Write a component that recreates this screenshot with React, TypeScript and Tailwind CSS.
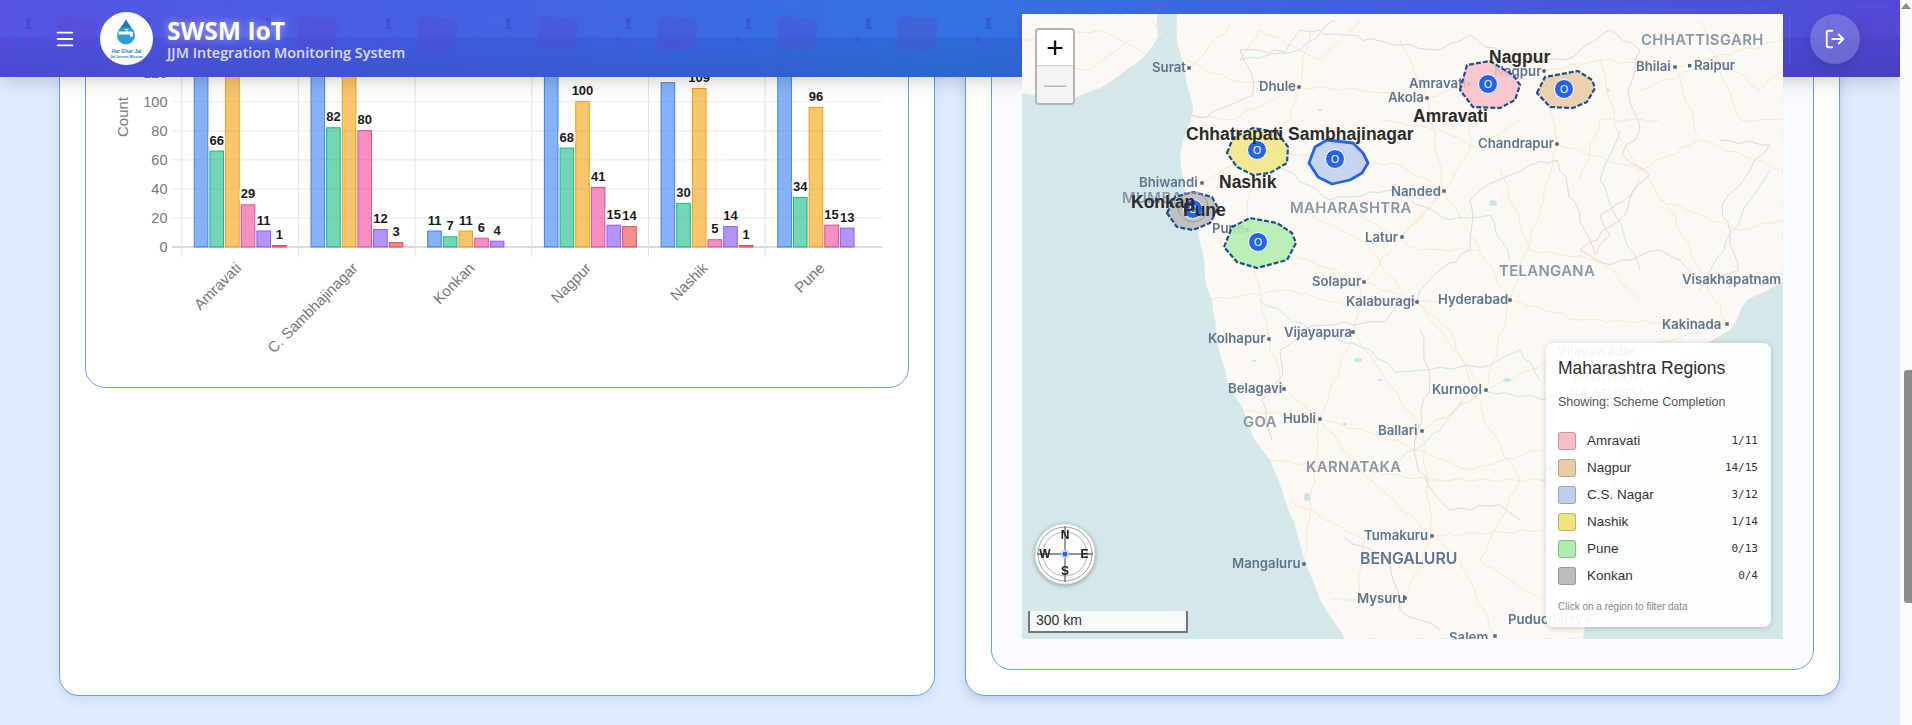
import React from 'react';
import { LogOut, Menu } from 'lucide-react';

const SANS = "font-['Liberation_Sans',Arial,sans-serif]";

const series = [
  { fill: 'rgba(59,130,246,0.62)', stroke: '#3b82f6' },
  { fill: 'rgba(16,185,129,0.58)', stroke: '#10b981' },
  { fill: 'rgba(245,158,11,0.6)', stroke: '#f59e0b' },
  { fill: 'rgba(236,72,153,0.6)', stroke: '#ec4899' },
  { fill: 'rgba(139,92,246,0.65)', stroke: '#8b5cf6' },
  { fill: 'rgba(239,68,68,0.6)', stroke: '#ef4444' },
];

const chartData = [
  { name: 'Amravati', values: [210, 66, 160, 29, 11, 1] },
  { name: 'C. Sambhajinagar', values: [220, 82, 170, 80, 12, 3] },
  { name: 'Konkan', values: [11, 7, 11, 6, 4, 0] },
  { name: 'Nagpur', values: [190, 68, 100, 41, 15, 14] },
  { name: 'Nashik', values: [113, 30, 109, 5, 14, 1] },
  { name: 'Pune', values: [180, 34, 96, 15, 13, 0] },
];

const Y_ZERO = 247;
const Y_UNIT = 1.454;
const CAT_START = 181.7;
const CAT_WIDTH = 116.7;

const BarChart = () => (
  <svg viewBox="86 -73 822 460" className={`h-[460px] w-[822px] ${SANS}`}>
    {[0, 20, 40, 60, 80, 100, 120].map((t) => {
      const y = Y_ZERO - t * Y_UNIT;
      return (
        <g key={t}>
          <line x1={172} x2={882} y1={y} y2={y} stroke={t === 0 ? '#cfcfcf' : '#eeeeee'} strokeWidth={1.4} />
          <text x={167.5} y={y + 5} textAnchor="end" className="fill-[#777777] text-[14.5px]">
            {t}
          </text>
        </g>
      );
    })}
    {[0, 1, 2, 3, 4, 5].map((i) => (
      <line
        key={i}
        x1={CAT_START + i * CAT_WIDTH}
        x2={CAT_START + i * CAT_WIDTH}
        y1={-60}
        y2={256.5}
        stroke="#e2e2e2"
        strokeWidth={1}
      />
    ))}
    <text transform="translate(128 117) rotate(-90)" textAnchor="middle" className="fill-[#777777] text-[15px]">
      Count
    </text>
    {chartData.map((cat, c) => {
      const left = CAT_START + c * CAT_WIDTH + 12.6;
      return (
        <g key={cat.name}>
          {cat.values.map((v, s) => {
            if (v === 0) return null;
            const x = left + s * 15.65;
            const top = Y_ZERO - v * Y_UNIT;
            return (
              <rect
                key={s}
                x={x}
                y={top}
                width={13.6}
                height={Y_ZERO - top}
                fill={series[s].fill}
                stroke={series[s].stroke}
                strokeWidth={1}
              />
            );
          })}
          {cat.values.map((v, s) => {
            if (v === 0) return null;
            const cx = left + s * 15.65 + 6.8;
            const top = Y_ZERO - v * Y_UNIT;
            const w = String(v).length * 7 + 3;
            return (
              <g key={s}>
                <rect x={cx - w / 2} y={top - 18} width={w} height={15} rx={3} fill="rgba(255,255,255,0.9)" />
                <text x={cx} y={top - 6.5} textAnchor="middle" className="fill-[#1a1a1a] text-[13px] font-bold">
                  {v}
                </text>
              </g>
            );
          })}
          <text
            transform={`translate(${CAT_START + c * CAT_WIDTH + CAT_WIDTH / 2 + 2} 269) rotate(-45)`}
            textAnchor="end"
            className="fill-[#777777] text-[15px]"
          >
            {cat.name}
          </text>
        </g>
      );
    })}
  </svg>
);

// breaks a straight run into a shaky one so tile lines don't look ruled
const wiggle = (pts: number[][], amp: number, seed: number) => {
  const out: number[][] = [];
  let n = 0;
  pts.forEach((p, i) => {
    const next = pts[i + 1];
    out.push(p);
    if (!next) return;
    const steps = Math.floor(Math.hypot(next[0] - p[0], next[1] - p[1]) / 9);
    for (let k = 1; k < steps; k++) {
      n += 1;
      const t = k / steps;
      out.push([
        p[0] + (next[0] - p[0]) * t + amp * Math.sin(n * 1.7 + seed),
        p[1] + (next[1] - p[1]) * t + amp * Math.cos(n * 2.3 + seed * 1.3),
      ]);
    }
  });
  return out;
};

const line = (pts: number[][]) => pts.map((p) => p.join(',')).join(' ');

const roads = [
  [[1185, 60], [1230, 80], [1299, 87], [1360, 90], [1427, 98], [1469, 84], [1544, 71], [1600, 60], [1675, 67], [1783, 40]],
  [[1299, 87], [1290, 120], [1257, 150], [1250, 180], [1247, 230], [1280, 250], [1364, 282], [1417, 302], [1510, 300], [1580, 320], [1727, 324]],
  [[1202, 183], [1257, 150], [1335, 159], [1400, 165], [1444, 191], [1510, 300]],
  [[1247, 230], [1269, 339], [1284, 389], [1320, 419], [1360, 470], [1432, 536], [1460, 560], [1495, 636]],
  [[1544, 71], [1557, 144], [1540, 210], [1510, 300], [1486, 390], [1422, 431], [1432, 536]],
  [[1353, 332], [1364, 282], [1402, 237], [1444, 191], [1427, 98], [1400, 40]],
  [[1353, 332], [1320, 419], [1304, 564]],
  [[1353, 332], [1422, 431], [1486, 390], [1417, 302]],
  [[1190, 115], [1230, 120], [1299, 87], [1310, 30]],
  [[1486, 390], [1560, 356], [1632, 351], [1727, 324]],
  [[1469, 84], [1470, 150], [1444, 191], [1402, 237]],
  [[1600, 60], [1620, 140], [1670, 210], [1727, 324]],
  [[1675, 67], [1700, 140], [1783, 170]],
  [[1557, 144], [1640, 170], [1700, 140]],
  [[1270, 460], [1360, 470], [1430, 480], [1560, 480]],
  [[1330, 600], [1405, 598], [1432, 536], [1540, 530]],
  [[1152, 20], [1190, 68], [1230, 25]],
  [[1022, 40], [1100, 30], [1160, 60]],
  [[1500, 170], [1530, 250], [1600, 260], [1640, 300]],
  [[1700, 20], [1740, 120], [1783, 120]],
  [[1210, 300], [1290, 290], [1346, 306]],
  [[1245, 410], [1320, 419], [1378, 435], [1470, 470], [1540, 450]],
  [[1290, 500], [1364, 540], [1357, 603]],
  [[1240, 60], [1260, 30], [1320, 60], [1360, 20]],
  [[1380, 120], [1440, 130], [1478, 148], [1520, 120]],
  [[1300, 210], [1365, 242], [1400, 290], [1450, 330]],
  [[1450, 330], [1490, 430], [1520, 480], [1480, 560], [1540, 600]],
  [[1640, 90], [1720, 60], [1760, 90], [1783, 70]],
  [[1660, 200], [1740, 230], [1783, 220]],
  [[1580, 180], [1600, 120], [1660, 120]],
  [[1030, 60], [1090, 70], [1130, 40]],
  [[1350, 210], [1420, 250], [1480, 250]],
];

const borders = [
  [[1190, 115], [1205, 118], [1222, 108], [1253, 95], [1250, 70], [1240, 50], [1285, 52], [1300, 30], [1345, 35], [1400, 45], [1440, 50], [1470, 35]],
  [[1470, 35], [1510, 60], [1565, 60], [1610, 30], [1640, 50]],
  [[1640, 50], [1628, 90], [1640, 130], [1622, 155], [1650, 175], [1625, 200], [1600, 215], [1610, 235], [1595, 255], [1557, 160]],
  [[1557, 160], [1530, 165], [1510, 175], [1480, 190], [1470, 200], [1472, 225], [1470, 250], [1440, 270], [1420, 290], [1417, 300], [1400, 300], [1385, 322]],
  [[1385, 322], [1315, 325], [1280, 350], [1283, 375], [1262, 400], [1272, 440]],
  [[1420, 330], [1430, 380], [1415, 440], [1418, 470], [1428, 485], [1450, 510], [1500, 505], [1520, 520]],
  [[1720, 140], [1770, 145], [1750, 170], [1722, 205], [1738, 270], [1700, 285], [1680, 260]],
  [[1345, 538], [1390, 560], [1400, 610], [1440, 630]],
  [[1640, 180], [1620, 220], [1580, 250], [1610, 265], [1660, 250], [1680, 260]],
];

const rivers = [
  [[1240, 60], [1300, 50], [1335, 20]],
  [[1270, 160], [1330, 200], [1390, 190], [1450, 220], [1490, 215], [1510, 260]],
  [[1260, 300], [1310, 330], [1370, 350], [1395, 372], [1420, 370], [1490, 365], [1520, 350], [1540, 380]],
  [[1620, 130], [1600, 180], [1640, 270]],
  [[1700, 290], [1750, 200], [1770, 170]],
  [[1560, 400], [1470, 390], [1440, 430], [1400, 460]],
];

const lakes = [
  [1358, 360, 4, 2],
  [1507, 380, 4, 2],
  [1307, 497, 3, 4],
  [1493, 203, 4, 3],
  [1345, 424, 2, 1.5],
  [1254, 361, 2.5, 1],
  [1608, 90, 2, 1.5],
  [1380, 380, 3, 1],
  [1320, 110, 2, 1],
];

const cities: [string, number, number, number, number][] = [
  ['Surat', 1152, 72, 1189, 68],
  ['Dhule', 1259, 91, 1299, 87],
  ['Amravati', 1409, 88, 1469, 84],
  ['Akola', 1388, 102, 1427, 98],
  ['Nagpur', 1494, 76, 1544, 71],
  ['Bhiwandi', 1139, 187, 1202, 183],
  ['Nanded', 1391, 196, 1444, 191],
  ['Pune', 1212, 233, 1247, 230],
  ['Latur', 1365, 242, 1402, 237],
  ['Solapur', 1312, 286, 1364, 282],
  ['Chandrapur', 1478, 148, 1557, 144],
  ['Bhilai', 1636, 71, 1675, 67],
  ['Hyderabad', 1438, 304, 1510, 300],
  ['Kalaburagi', 1346, 306, 1417, 302],
  ['Vijayapura', 1284, 337, 1353, 332],
  ['Kolhapur', 1208, 343, 1269, 339],
  ['Belagavi', 1228, 393, 1284, 389],
  ['Hubli', 1283, 423, 1320, 419],
  ['Kurnool', 1432, 394, 1486, 390],
  ['Ballari', 1378, 435, 1422, 431],
  ['Tumakuru', 1364, 540, 1432, 536],
  ['Mangaluru', 1232, 568, 1304, 564],
  ['Mysuru', 1357, 603, 1405, 598],
  ['Salem', 1449, 642, 1495, 636],
  ['Puducherry', 1508, 624, 1588, 619],
  ['Kakinada', 1662, 329, 1727, 324],
  ['Vijayawada', 1557, 356, 1632, 351],
  ['Nellore', 1548, 476, 1600, 472],
];

const states: [string, number, number][] = [
  ['CHHATTISGARH', 1641, 45],
  ['MAHARASHTRA', 1290, 213],
  ['TELANGANA', 1499, 276],
  ['GOA', 1243, 427],
  ['KARNATAKA', 1306, 472],
  ['MUMBAI', 1122, 203],
  ['ANDHRA', 1573, 382],
  ['PRADESH', 1570, 399],
];

const regions = [
  {
    name: 'Amravati',
    fill: 'rgba(249,189,200,0.85)',
    points: [[1460, 90], [1467, 65], [1490, 61], [1513, 75], [1520, 85], [1515, 100], [1500, 108], [1473, 107]],
    marker: [1488, 84],
  },
  {
    name: 'Nagpur',
    fill: 'rgba(232,204,168,0.9)',
    points: [[1537, 93], [1545, 77], [1578, 71], [1592, 80], [1595, 88], [1587, 102], [1573, 108], [1550, 107]],
    marker: [1564, 89],
  },
  {
    name: 'Nashik',
    fill: 'rgba(240,228,122,0.8)',
    points: [[1227, 153], [1233, 138], [1253, 128], [1277, 132], [1288, 147], [1287, 163], [1270, 173], [1253, 175], [1237, 167]],
    marker: [1257, 150],
  },
  {
    name: 'Pune',
    fill: 'rgba(174,238,171,0.85)',
    points: [[1224, 247], [1232, 227], [1250, 218], [1277, 223], [1292, 233], [1296, 243], [1287, 260], [1257, 268], [1237, 262]],
    marker: [1258, 242],
  },
  {
    name: 'Konkan',
    fill: 'rgba(188,188,188,0.9)',
    points: [[1167, 213], [1175, 197], [1193, 192], [1212, 197], [1218, 208], [1210, 223], [1193, 230], [1177, 227]],
    marker: [1193, 209],
  },
];

const regionLabels: [string, number, number][] = [
  ['Nagpur', 1489, 63],
  ['Amravati', 1413, 122],
  ['Chhatrapati Sambhajinagar', 1186, 140],
  ['Nashik', 1219, 188],
  ['Konkan', 1131, 208],
  ['Pune', 1183, 216],
];

const Marker = ({ x, y }: { x: number; y: number }) => (
  <g>
    <circle cx={x} cy={y} r={9.5} fill="#2563eb" stroke="#ffffff" strokeWidth={1} />
    <text x={x} y={y + 3.8} textAnchor="middle" className="fill-white text-[10.5px]">
      O
    </text>
  </g>
);

const MapCanvas = () => (
  <svg viewBox="1022 14 761 625" className={`absolute inset-0 h-[625px] w-[761px] ${SANS}`}>
    <defs>
      <filter id="tile-blur">
        <feGaussianBlur stdDeviation="0.45" />
      </filter>
    </defs>
    <rect x={1022} y={14} width={761} height={625} fill="#d4e7ea" />
    <g filter="url(#tile-blur)">
      <polygon
        fill="#fcf8f4"
        points={line(
          wiggle(
            [
              [1177, 14], [1177, 43], [1185, 73], [1193, 110], [1190, 123], [1183, 140], [1180, 157], [1183, 177],
              [1187, 200], [1197, 227], [1203, 253], [1205, 280], [1212, 300], [1217, 340], [1227, 380], [1242, 407],
              [1253, 437], [1270, 460], [1283, 493], [1297, 533], [1307, 567], [1320, 600], [1345, 639], [1583, 639],
              [1590, 590], [1600, 530], [1620, 450], [1680, 360], [1730, 330], [1747, 300], [1783, 282], [1783, 14],
            ],
            0.7,
            2,
          ),
        )}
      />
      <polygon
        fill="#fcf8f4"
        points={line(
          wiggle(
            [[1022, 14], [1157, 14], [1158, 37], [1143, 58], [1120, 75], [1100, 88], [1077, 97], [1053, 100], [1022, 93]],
            0.7,
            5,
          ),
        )}
      />
      {roads.map((r, i) => (
        <polyline key={i} points={line(wiggle(r, 1.6, i))} fill="none" stroke="#fae8cc" strokeWidth={1} />
      ))}
      {rivers.map((r, i) => (
        <polyline key={i} points={line(wiggle(r, 1.6, i + 40))} fill="none" stroke="#cbe4e8" strokeWidth={1} />
      ))}
      {lakes.map(([cx, cy, rx, ry], i) => (
        <ellipse key={i} cx={cx} cy={cy} rx={rx} ry={ry} fill="#cbe4e8" />
      ))}
      {borders.map((r, i) => (
        <polyline key={i} points={line(wiggle(r, 2, i + 20))} fill="none" stroke="#ebd2d3" strokeWidth={1} />
      ))}
      {states.map(([name, x, y]) => (
        <text key={name} x={x} y={y} className="fill-[#8a97a9] font-['Inter',sans-serif] text-[14.8px] font-semibold tracking-[0.4px]">
          {name}
        </text>
      ))}
      {cities.map(([name, x, y, dx, dy]) => (
        <g key={name}>
          <text x={x} y={y} className="fill-[#5c7695] font-['Inter',sans-serif] text-[13.2px] font-semibold">
            {name}
          </text>
          <rect x={dx - 1.7} y={dy - 1.7} width={3.4} height={3.4} fill="#4d6686" />
        </g>
      ))}
      <text x={1694} y={70} className="fill-[#5c7695] font-['Inter',sans-serif] text-[13.2px] font-semibold">
        Raipur
      </text>
      <rect x={1688} y={64} width={3.4} height={3.4} fill="#4d6686" />
      <text x={1682} y={284} className="fill-[#5c7695] font-['Inter',sans-serif] text-[13.2px] font-semibold">
        Visakhapatnam
      </text>
      <text x={1360} y={564} className="fill-[#5c7695] font-['Inter',sans-serif] text-[15.8px] font-semibold">
        BENGALURU
      </text>
    </g>
    <polygon
      points={line([[1309, 163], [1315, 147], [1327, 140], [1353, 143], [1363, 153], [1368, 163], [1362, 173], [1350, 180], [1332, 184], [1318, 177]])}
      fill="rgba(188,208,238,0.85)"
      stroke="#2563eb"
      strokeWidth={2.8}
      strokeLinejoin="round"
    />
    {regions.map((r) => (
      <polygon
        key={r.name}
        points={line(r.points)}
        fill={r.fill}
        stroke="#1e4f8f"
        strokeWidth={2.2}
        strokeDasharray="5 2"
        strokeLinejoin="round"
      />
    ))}
    <circle cx={1193} cy={207} r={15} fill="none" stroke="#9a9a9a" strokeWidth={1} />
    {regions.map((r) => (
      <Marker key={r.name} x={r.marker[0]} y={r.marker[1]} />
    ))}
    <Marker x={1335} y={159} />
    {regionLabels.map(([name, x, y]) => (
      <text key={name} x={x} y={y} className="fill-[#2b2b2b] text-[17.5px] font-bold">
        {name}
      </text>
    ))}
  </svg>
);

const Compass = () => (
  <svg viewBox="0 0 62 62" className={`absolute left-[12px] top-[509px] h-[62px] w-[62px] drop-shadow-[0_1px_2px_rgba(0,0,0,0.35)] ${SANS}`}>
    <circle cx={31} cy={31} r={30} fill="#fdfdfd" stroke="#dddddd" strokeWidth={1} />
    <circle cx={31} cy={31} r={27} fill="none" stroke="#8a8a8a" strokeWidth={0.8} />
    <circle cx={31} cy={31} r={22} fill="none" stroke="#a0a0a0" strokeWidth={0.8} />
    <line x1={31} y1={3} x2={31} y2={59} stroke="#6b6b6b" strokeWidth={1.3} />
    <line x1={3} y1={31} x2={59} y2={31} stroke="#6b6b6b" strokeWidth={1.3} />
    <text x={31} y={16} textAnchor="middle" className="fill-[#222222] text-[12px] font-bold">N</text>
    <text x={31} y={52} textAnchor="middle" className="fill-[#222222] text-[12px] font-bold">S</text>
    <text x={11} y={35} textAnchor="middle" className="fill-[#222222] text-[12px] font-bold">W</text>
    <text x={50.5} y={35} textAnchor="middle" className="fill-[#222222] text-[12px] font-bold">E</text>
    <circle cx={31} cy={31} r={4} fill="#ffffff" stroke="#aaaaaa" strokeWidth={0.7} />
    <circle cx={31} cy={31} r={2.6} fill="#2563eb" />
  </svg>
);

const legendRows = [
  { name: 'Amravati', value: '1/11', color: 'bg-[#f9bdc8]' },
  { name: 'Nagpur', value: '14/15', color: 'bg-[#e8cca8]' },
  { name: 'C.S. Nagar', value: '3/12', color: 'bg-[#bcd0ee]' },
  { name: 'Nashik', value: '1/14', color: 'bg-[#f0e47a]' },
  { name: 'Pune', value: '0/13', color: 'bg-[#aeeeab]' },
  { name: 'Konkan', value: '0/4', color: 'bg-[#bcbcbc]' },
];

const Legend = () => (
  <div className={`absolute left-[524px] top-[329px] h-[284px] w-[225px] rounded-lg bg-white/[0.93] pl-[12px] pr-[13px] shadow-[0_1px_6px_rgba(0,0,0,0.2)] ${SANS}`}>
    <h4 className="pt-[13px] text-[17.5px] leading-[24px] text-[#2e2e2e]">Maharashtra Regions</h4>
    <p className="mt-[14px] text-[12.5px] leading-[16px] text-[#555555]">Showing: Scheme Completion</p>
    <div className="mt-[22px] flex flex-col gap-[9px]">
      {legendRows.map((row) => (
        <div key={row.name} className="flex h-[18px] items-center">
          <span className={`h-[18px] w-[18px] rounded-[3px] border border-black/20 ${row.color}`} />
          <span className="ml-[11px] flex-1 text-[13.5px] text-[#333333]">{row.name}</span>
          <span className="font-['DejaVu_Sans_Mono',monospace] text-[11px] text-[#333333]">{row.value}</span>
        </div>
      ))}
    </div>
    <p className="mt-[15px] text-[10px] leading-[14px] text-[#888888]">Click on a region to filter data</p>
  </div>
);

const Logo = () => (
  <svg viewBox="99.5 10.5 53 53" className={`h-[53px] w-[53px] shrink-0 ${SANS}`}>
    <circle cx={126} cy={37} r={26.5} fill="#ffffff" />
    <path d="M125.5 18 C122 25 116.5 28 116.5 34 A9 9 0 0 0 134.5 34 C134.5 28 129 25 125.5 18 Z" fill="#2f9bd8" />
    <path d="M125.5 18 C124 21 122 23.5 120.5 26 L130.5 26 C129 23.5 127 21 125.5 18 Z" fill="#1d7fb8" />
    <path d="M118 30 H126 V28.5 H124 V27.5 H128 V28.5 H127 V30 H131 C132 30 132.5 31 132.5 32 V35 H129.5 V33 H118 Z" fill="#ffffff" />
    <text x={126} y={51} textAnchor="middle" className="fill-[#2a7fc0] text-[5px] font-bold">Har Ghar Jal</text>
    <text x={126} y={56} textAnchor="middle" className="fill-[#2a7fc0] text-[3.6px] font-bold">Jal Jeevan Mission</text>
  </svg>
);

const HeaderPattern = () => (
  <svg className="absolute inset-0 h-full w-full">
    <defs>
      <pattern id="header-pattern" x={0} y={0} width={120} height={120} patternUnits="userSpaceOnUse">
        <g fill="none" stroke="#6a5cd8" strokeOpacity={0.45} strokeWidth={0.8}>
          <circle cx={59} cy={6.7} r={2} />
          <circle cx={67} cy={6.7} r={1.5} />
          <circle cx={75} cy={6.7} r={2} />
          <circle cx={83} cy={6.7} r={2} />
          <circle cx={14} cy={20} r={3} />
        </g>
        <path
          d="M64 16 C72 15 76 20 84 18 C92 16 98 18 98 24 C98 30 94 32 97 38 C99 45 94 50 86 50 C78 51 74 47 68 50 C60 52 56 47 56 42 C57 36 59 33 57 28 C55 20 58 16 64 16 Z"
          fill="#5b3fc0"
          fillOpacity={0.26}
        />
        <path d="M26 18 H31 L30 26 L33 29 H25 L27 26 Z" fill="#3b3fc4" fillOpacity={0.5} />
        <path d="M15 37 L17 44 L27 45 V43 L20 42 L19 37 Z" fill="#3b55d8" fillOpacity={0.7} />
      </pattern>
    </defs>
    <rect width="100%" height="100%" fill="url(#header-pattern)" />
  </svg>
);

const Header = () => (
  <header className="relative z-20 flex h-[77px] shrink-0 items-center bg-[linear-gradient(90deg,#5350e4_0%,#3f60e4_27%,#2f6fe0_50%,#3c5ce0_72%,#4f46d4_100%)] pl-[54px] pr-[40px] text-white shadow-[0_4px_18px_rgba(0,0,0,0.18)]">
    <div className="absolute inset-0 bg-[linear-gradient(180deg,rgba(255,255,255,0.02)_0%,rgba(255,255,255,0.02)_48%,rgba(0,0,0,0.03)_48%,rgba(0,0,0,0.09)_100%)]" />
    <HeaderPattern />
    <Menu size={22} strokeWidth={2} className="relative shrink-0" />
    <div className="relative ml-[23.5px]">
      <Logo />
    </div>
    <div className="relative ml-[14.5px] flex flex-col font-['Open_Sans',sans-serif]">
      <span className="text-[24.6px] font-bold leading-[28px] [text-shadow:0_0_10px_rgba(255,255,255,0.5)]">SWSM IoT</span>
      <span className="text-[14.4px] font-semibold leading-[16px] text-white/80">JJM Integration Monitoring System</span>
    </div>
    <div className="relative ml-auto mr-[20px] h-[50px] w-px bg-white/10" />
    <button className="relative flex h-[50px] w-[50px] items-center justify-center rounded-full bg-white/20 shadow-[0_4px_10px_rgba(0,0,0,0.12)]">
      <LogOut size={22} strokeWidth={2} />
    </button>
  </header>
);

const App = () => {
  return (
    <div className="flex h-[725px] w-full overflow-hidden bg-[#e0ecfe]">
      <div className="flex min-w-0 flex-1 flex-col">
        <Header />
        <main className="-mt-[177px] grid grid-cols-[876px_875px] gap-[30px] pl-[59px]">
          <section className="h-[796px] rounded-[20px] border border-[#6d9bef] bg-white p-[25px] shadow-[0_4px_12px_rgba(60,100,180,0.12)]">
            <div className="h-[462px] w-[824px] rounded-[20px] border border-[#6d9bef] bg-white">
              <BarChart />
            </div>
          </section>
          <section className="h-[796px] rounded-[20px] border border-[#6d9bef] bg-white p-[25px] shadow-[0_4px_12px_rgba(60,100,180,0.25)]">
            <div className="h-[744px] rounded-[20px] border border-[#6d9bef] bg-[#fafbff] px-[30px] pb-[30px] pt-[87px]">
              <div className="relative z-30 h-[625px] w-[761px] overflow-hidden">
                <MapCanvas />
                <div className="absolute left-[13px] top-[14px] flex h-[77px] w-[40px] flex-col overflow-hidden rounded-[4px] border-2 border-[#b5b5b5] bg-white">
                  <span className={`flex h-[36px] items-center justify-center border-b border-[#cccccc] text-[30px] leading-none text-black ${SANS}`}>+</span>
                  <span className={`flex flex-1 items-center justify-center bg-[#f4f4f4] text-[22px] leading-none text-[#bbbbbb] ${SANS}`}>—</span>
                </div>
                <Compass />
                <div className={`absolute left-[6px] top-[597px] h-[22px] w-[160px] border-2 border-t-0 border-[#777777] bg-white/80 pl-[6px] text-[14px] leading-[19px] text-[#333333] ${SANS}`}>
                  300 km
                </div>
                <Legend />
              </div>
            </div>
          </section>
        </main>
      </div>
      <div className="relative z-40 flex w-[12px] shrink-0 flex-col items-end bg-[#fbfbfb]">
        <span className="mr-[1px] mt-[3px] h-0 w-0 border-x-[5px] border-b-[6px] border-x-transparent border-b-[#8a8a8a]" />
        <span className="mt-[361px] h-[233px] w-[8px] rounded-l-[3px] bg-[#8c8c8c]" />
      </div>
    </div>
  );
};

export default App;
